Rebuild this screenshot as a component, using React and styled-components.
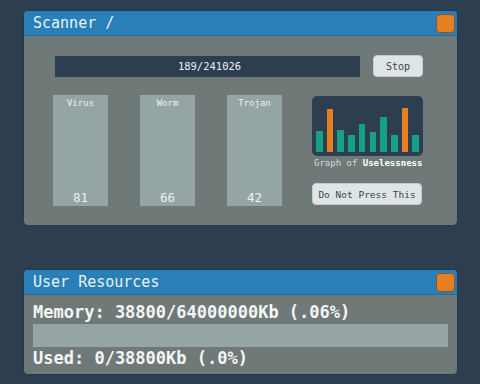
import React from "react";
import styled, { createGlobalStyle } from "styled-components";

const Global = createGlobalStyle`
  html, body { margin: 0; padding: 0; background: #2c3e50; }
  body { font-family: "DejaVu Sans Mono", "Liberation Mono", monospace; }
`;

const Page = styled.div`
  width: 480px;
  height: 384px;
  box-sizing: border-box;
  padding: 10px 22px 0 23px;
  display: flex;
  flex-direction: column;
  gap: 43px;
  overflow: hidden;
`;

const Window = styled.div`
  width: 435px;
  height: ${(p) => p.$h}px;
  box-sizing: border-box;
  background: #6f7978;
  border: 1px solid #26384a;
  border-radius: 5px;
  display: flex;
  flex-direction: column;
  overflow: hidden;
`;

const TitleBar = styled.div`
  height: 24px;
  flex: none;
  background: #2980b9;
  border-bottom: 1px solid #2a6a96;
  display: flex;
  align-items: center;
  justify-content: space-between;
  padding: 0 2px 0 9px;
`;

const Title = styled.div`
  color: #ecf0f1;
  font-size: 15px;
  line-height: 24px;
`;

const CloseBox = styled.div`
  width: 19px;
  height: 19px;
  box-sizing: border-box;
  background: #e67e22;
  border: 1px solid #7a5a3a;
  border-radius: 4px;
`;

const ScanBody = styled.div`
  padding: 19px 0 0 29px;
  display: flex;
  flex-direction: column;
`;

const TopRow = styled.div`
  display: flex;
  align-items: center;
  gap: 13px;
  margin-left: 2px;
`;

const Progress = styled.div`
  width: 305px;
  height: 21px;
  background: #2c3e50;
  color: #ecf0f1;
  font-size: 10.5px;
  display: flex;
  align-items: center;
  justify-content: center;
  padding-left: 4px;
  box-sizing: border-box;
`;

const Button = styled.div`
  width: ${(p) => p.$w}px;
  height: 22px;
  box-sizing: border-box;
  background: #dfe5e7;
  border: 1px solid #c3cbcd;
  border-radius: 4px;
  color: #3a4447;
  font-size: ${(p) => p.$fs}px;
  display: flex;
  align-items: center;
  justify-content: center;
`;

const MainRow = styled.div`
  display: flex;
  margin-top: 18px;
`;

const Bars = styled.div`
  display: flex;
  gap: 32px;
`;

const StatBar = styled.div`
  width: 55px;
  height: 111px;
  background: #95a5a6;
  display: flex;
  flex-direction: column;
  align-items: center;
  justify-content: space-between;
  color: #ecf0f1;
  box-sizing: border-box;
  padding: 2px 0 0;
`;

const StatLabel = styled.div`
  font-size: 9px;
  line-height: 12px;
`;

const StatNum = styled.div`
  font-size: 12.5px;
  line-height: 16px;
`;

const Side = styled.div`
  margin-left: 30px;
  width: 111px;
  display: flex;
  flex-direction: column;
  align-items: flex-start;
  padding-top: 1px;
`;

const Graph = styled.div`
  width: 111px;
  height: 60px;
  box-sizing: border-box;
  background: #2c3e50;
  border-radius: 5px;
  padding: 0 4px 4px 4px;
  display: flex;
  align-items: flex-end;
  justify-content: space-between;
`;

const GBar = styled.div`
  width: 6.5px;
  background: ${(p) => (p.$hot ? "#e67e22" : "#16a085")};
`;

const Caption = styled.div`
  margin-top: 1px;
  font-size: 9px;
  line-height: 12px;
  color: #d5dcdd;
  padding-left: 2px;
  white-space: nowrap;
`;

const Strong = styled.span`
  color: #ffffff;
  font-weight: bold;
`;

const Spacer = styled.div`
  height: 14px;
`;

const ResBody = styled.div`
  padding: 7px 9px 0 9px;
  display: flex;
  flex-direction: column;
`;

const ResLine = styled.div`
  color: #f4f6f6;
  font-size: 17px;
  font-weight: bold;
  line-height: 20px;
  white-space: nowrap;
`;

const MemBar = styled.div`
  height: 23px;
  background: #95a5a6;
  margin: 2px 0 1px;
  width: 415px;
`;

const graphData = [
  { h: 21 },
  { h: 43, hot: true },
  { h: 22 },
  { h: 17 },
  { h: 28 },
  { h: 20 },
  { h: 35 },
  { h: 17 },
  { h: 44, hot: true },
  { h: 17 },
];

const stats = [
  { label: "Virus", n: 81 },
  { label: "Worm", n: 66 },
  { label: "Trojan", n: 42 },
];

export default function App() {
  return (
    <>
      <Global />
      <Page>
        <Window $h={216}>
          <TitleBar>
            <Title>Scanner /</Title>
            <CloseBox />
          </TitleBar>
          <ScanBody>
            <TopRow>
              <Progress>189/241026</Progress>
              <Button $w={50} $fs={10}>Stop</Button>
            </TopRow>
            <MainRow>
              <Bars>
                {stats.map((s) => (
                  <StatBar key={s.label}>
                    <StatLabel>{s.label}</StatLabel>
                    <StatNum>{s.n}</StatNum>
                  </StatBar>
                ))}
              </Bars>
              <Side>
                <Graph>
                  {graphData.map((b, i) => (
                    <GBar key={i} $hot={b.hot} style={{ height: b.h }} />
                  ))}
                </Graph>
                <Caption>
                  Graph of <Strong>Uselessness</Strong>
                </Caption>
                <Spacer />
                <Button $w={110} $fs={9.5}>Do Not Press This</Button>
              </Side>
            </MainRow>
          </ScanBody>
        </Window>
        <Window $h={106}>
          <TitleBar>
            <Title>User Resources</Title>
            <CloseBox />
          </TitleBar>
          <ResBody>
            <ResLine>Memory: 38800/64000000Kb (.06%)</ResLine>
            <MemBar />
            <ResLine>Used: 0/38800Kb (.0%)</ResLine>
          </ResBody>
        </Window>
      </Page>
    </>
  );
}
